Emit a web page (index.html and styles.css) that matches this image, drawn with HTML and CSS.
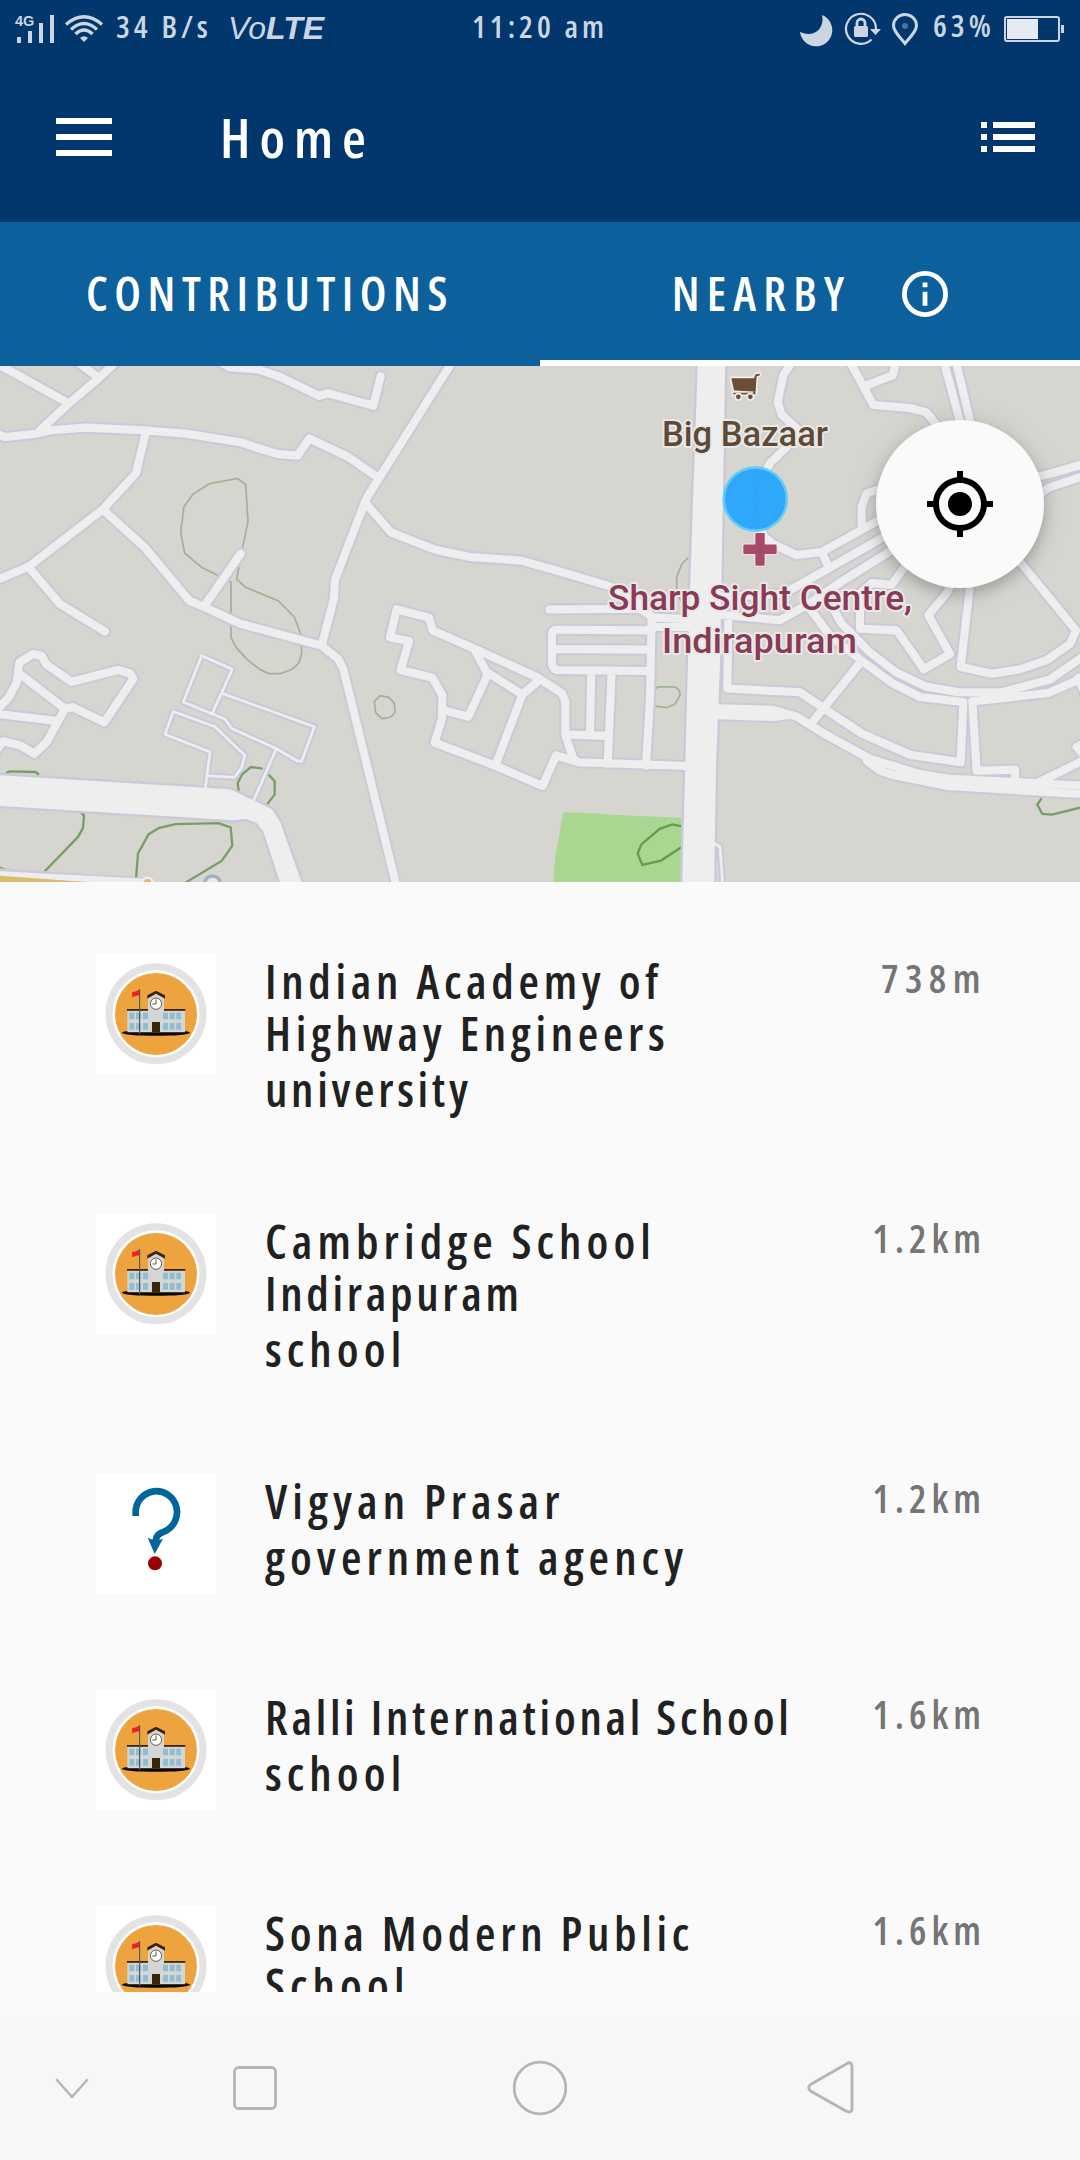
FILE: index.html
```html
<!DOCTYPE html>
<html lang="en">
<head>
<meta charset="utf-8">
<title>Home</title>
<link rel="stylesheet" href="styles.css">
</head>
<body>
<div class="screen">
  <header class="top">
    <div class="status">
      <div class="status-left">
        <svg class="i-signal" viewBox="0 0 44 54" width="44" height="54"><text x="0" y="24" class="net">4G</text><path d="M2 35h4v6h-4zM13 29h4v12h-4zM24 21h4v20h-4zM35 13h4v28h-4z" fill="#ccd6e2"/></svg>
        <svg class="i-wifi" viewBox="0 0 38 54" width="38" height="54" fill="none" stroke="#ccd6e2" stroke-width="3.2"><path d="M1 22.500Q19 7 37 22.500M6 27.500Q19 15.500 32 27.500M10.500 32Q19 24 27.500 32"/><path d="M19 40l-4-4q4-3.500 8 0z" fill="#ccd6e2" stroke="none"/></svg>
        <span class="hand small speed">34 B/s</span>
        <span class="volte">Vo<b>LTE</b></span>
      </div>
      <span class="hand small clock">11:20 am</span>
      <div class="status-right">
        <svg viewBox="0 0 34 54" width="34" height="54"><path d="M23 13A16.200 16.200 0 1 1 1 30Q12 35 19.500 28Q25 22 23 13z" fill="#ccd6e2"/></svg>
        <svg class="i-lock" viewBox="0 0 37 54" width="37" height="54" fill="none" stroke="#ccd6e2" stroke-width="2.200"><path d="M32 27A15 15 0 1 0 27.500 37.500"/><path d="M26 27h11l-5.500 6z" fill="#ccd6e2" stroke="none"/><rect x="10" y="24" width="14" height="11" rx="1.500" fill="#ccd6e2" stroke="none"/><path d="M13 25v-4a4 4 0 0 1 8 0v4" stroke-width="2.800"/></svg>
        <svg class="i-pin" viewBox="0 0 28 54" width="28" height="54"><path d="M14 41.500C8 34 2.500 29 2.500 23.500a11.500 11 0 0 1 23 0C25.500 29 20 34 14 41.500z" fill="none" stroke="#ccd6e2" stroke-width="3"/><circle cx="14" cy="24" r="3" fill="#4d7299"/></svg>
        <span class="hand small pct">63%</span>
        <svg class="i-batt" viewBox="0 0 61 54" width="61" height="54"><rect x="1" y="15" width="54" height="24" rx="2" fill="none" stroke="#ccd6e2" stroke-width="2"/><path d="M3 17h31v20H3z" fill="#e6eaf1"/><path d="M57 23h3v8h-3z" fill="#ccd6e2"/></svg>
      </div>
    </div>
    <div class="appbar">
      <svg width="56" height="38" viewBox="0 0 56 38" fill="#fff"><path d="M0 0h56v6H0zM0 16h56v6H0zM0 32h56v6H0z"/></svg>
      <h1 class="hand title">Home</h1>
      <svg width="54" height="30" viewBox="0 0 54 30" fill="#fff"><path d="M0 0h6v6H0zM0 12h6v6H0zM0 24h6v6H0zM12 0h42v6H12zM12 12h42v6H12zM12 24h42v6H12z"/></svg>
    </div>
  </header>
  <nav class="tabs">
    <div class="tab"><span class="hand tab-a">CONTRIBUTIONS</span></div>
    <div class="tab active"><span class="hand tab-b">NEARBY</span>
      <svg width="46" height="46" viewBox="0 0 46 46"><circle cx="23" cy="23" r="20.600" fill="none" stroke="#fff" stroke-width="4.800"/><path d="M20.600 11.500h4.800v4.700h-4.800zM20.600 20.700h4.800v14h-4.800z" fill="#fff"/></svg>
    </div>
  </nav>
  <section class="map">
    <svg class="map-art" width="1080" height="516" viewBox="0 0 1080 516">
      <defs>
        <g id="blocks">
          <path transform="translate(0 -6) scale(.33333 .33801)" d="M-20 1227L690 1270 815 1328 840 1365 910 1560H845L790 1395 770 1370 740 1358 700 1362-20 1318z"/>
          <path transform="translate(360 -6) scale(.33333 .33801)" d="M1014 -10L988 740 966 1570H1062L1068 1200 1080 900 1096 -10z"/>
        </g>
        <g id="roads">
          <path transform="translate(0 -6) scale(.33333 .33801)" d="M-20 5L60 48 205 128M225 0L295 52M360 -5L295 55 205 130 120 208M-20 215L15 228 110 218 150 208 258 200 430 208 560 218 720 243 830 278 893 283 928 232 1045 287 1130 345M437 215L408 335 308 442 85 612-20 655M308 442L435 555 568 712 615 732 720 780 965 845 1015 885 1030 915 1080 1115 1195 1580M615 725L722 573M85 612L180 722 315 803M640 -5L690 22 775 28 840 50 957 106 983 98 1120 135 1142 48M965 845L1002 705 1005 650 1095 420 1105 400 1360 0M-10 1035L25 1000 50 955 58 895 98 870 125 875 138 900 215 952 353 917 390 927 400 943 313 1072 218 1027 195 1032 140 1130 103 1165 60 1140 10 1128-15 1160M60 930L190 1028M-10 1047L165 1067"/>
          <path transform="translate(360 -6) scale(.33333 .33801)" d="M18 425L93 510 228 562 330 583 480 593 580 620 745 668 820 700 875 760M568 738L840 736 880 762 1010 768M875 762L870 1000 858 1200M875 790L1010 790M875 800L590 798Q576 798 576 815V900Q580 916 592 917L870 920M578 855L868 857M694 920L690 1105M755 920L743 1195M620 1108L745 1112M110 738L207 762 218 800 345 855 530 938 605 985 616 1010V1110L640 1180 655 1190 745 1193 1000 1202M110 738L90 820 147 832 122 917 217 940 247 992 246 1060 224 1132 400 1198 548 1260 588 1170 655 1190M247 1035L325 1055 383 930 345 860M383 925L487 990 540 945M487 990L408 1195"/>
          <path transform="translate(720 -6) scale(.33333 .33801)" d="M220 0L190 45 173 125 185 162 245 215 150 305 118 370 108 440 130 520 160 545 230 577 305 568 420 505 520 450M305 568L325 610M390 5L460 133 570 142 620 155 660 205M440 75L518 45 530 0M670 0L725 200M707 0L755 200M425 500V435L440 395 470 385H520M-40 703L190 692 320 620 480 530 560 480M-40 750L180 770 260 725 350 665 520 560M950 345L985 338 1100 305M950 405L985 378 1100 340M555 610L515 665 455 660 420 690V795L530 800 612 915 690 870 625 755 680 690 700 650M752 650L722 908 815 928 900 915 980 888 1050 840 1068 800 890 585M330 720L365 780 450 865 530 925 615 965 715 983H845L990 945 1100 870M265 730L330 815 425 890 515 955 600 997 730 1012 722 1190 570 1168 425 1105 240 983 22 972 25 765M425 890L270 1080M1100 935L985 985 757 1010 770 1215 885 1212V1240M1075 940L1100 1000M-30 1030L160 1035 230 1055 320 1110 450 1180 600 1225 680 1238 1100 1260M-30 1050L160 1056 205 1050M440 1185L480 1215 520 1228 680 1260 1100 1285M955 1250L1100 1180M1100 1180L1070 1145 1100 1130"/>
        </g>
        <g id="lanes">
          <path transform="translate(0 -6) scale(.33333 .33801)" d="M605 875L697 915 637 1045M605 875L550 1012 637 1047 675 1062 695 1090 830 1150 893 1187H905L943 1085 668 987M828 1152L758 1310M520 1040L645 1085 735 1170 725 1205 703 1235 622 1230M520 1040L495 1107 630 1160 615 1275"/>
          <path transform="translate(720 -6) scale(.33333 .33801)" d="M-20 1428L0 1440 10 1580"/>
        </g>
      </defs>
      <rect width="1080" height="516" fill="#d6d5d0"/>
      <path transform="translate(360 -6) scale(.33333 .33801)" d="M610 1338L642 1339 712 1342 780 1346 850 1350 965 1354V1570H577L586 1470z" fill="#a9d792"/>
      <g fill="none" stroke="#9fb292" stroke-width="5" stroke-linejoin="round">
        <path transform="translate(0 -6) scale(.33333 .33801)" d="M728 555L744 478 737 369 713 350 628 366 580 396 552 434 542 510 554 571 604 613 653 637M688 656H693V821L709 851 740 885 780 916 808 928H840L876 915 896 897 905 868 903 812 883 761 836 713 736 672 710 648 717 612"/>
        <path transform="translate(360 -6) scale(.33333 .33801)" d="M43 1010L60 993 87 998 103 1016 105 1042 92 1057 66 1061 47 1044zM886 972L896 967H945L957 976 961 990 945 1018 922 1028 883 1024M985 585L966 603 950 642V680L962 712 975 723"/>
      </g>
      <g fill="none" stroke="#789e68" stroke-width="7">
        <path transform="translate(0 -6) scale(.33333 .33801)" d="M716 1275L713 1252 727 1225 753 1204 788 1209M805 1226L824 1246V1285L802 1314M18 1222L30 1217 107 1219 117 1227M242 1338L252 1347 249 1384 234 1411 130 1517M408 1536L414 1460 446 1403 478 1384 527 1373 655 1370 692 1383 697 1437 665 1482 555 1547M-5 1500L15 1508"/>
        <path transform="translate(360 -6) scale(.33333 .33801)" stroke="#649c4a" d="M965 1380L937 1374 899 1387 844 1433 833 1460 847 1494 903 1481 965 1441"/>
        <path transform="translate(720 -6) scale(.33333 .33801)" d="M965 1296L952 1315 967 1343 996 1345 1090 1322"/>
      </g>
      <path d="M-5 506L150 516" stroke="#c9cad9" stroke-width="8"/>
      <path d="M-5 508L150 516" stroke="#eee" stroke-width="6"/>
      <path d="M-5 509.500L100 517H-5z" fill="#d9bd6c"/>
      <circle cx="147.500" cy="517" r="6.500" fill="#eee"/><circle cx="147.500" cy="517" r="4" fill="#dabb6c"/>
      <circle cx="212.500" cy="518" r="8" fill="#e8e8ee" stroke="#a9adc4" stroke-width="3.500"/>
      <use href="#lanes" class="lane-case"/>
      <use href="#blocks" class="block-case"/>
      <use href="#roads" class="road-case"/>
      <use href="#blocks" class="block"/>
      <use href="#roads" class="road"/>
      <use href="#lanes" class="lane"/>
      <g transform="translate(720 -6) scale(.33333 .33801)">
        <g stroke="#eee" stroke-width="10" paint-order="stroke" stroke-linejoin="round" fill="#6c4e35">
          <path d="M34 54H102L106 43 119 40V46L110 48 106 102H40V97H100L101 93 42 90z"/>
          <circle cx="55" cy="109" r="7"/><circle cx="91" cy="109" r="7"/>
        </g>
        <path d="M108 512h24q2 0 2 4v30h32q4 0 4 4v20q0 4-4 4h-32v30q0 5-4 5h-20q-4 0-4-5v-30H74q-4 0-4-4v-20q0-4 4-4h32v-30z" fill="#a64a68" stroke="#eaeaea" stroke-width="6" paint-order="stroke"/>
      </g>
      <circle cx="755.300" cy="133" r="31.500" fill="#2fa8fc" stroke="#5fcdf5" stroke-width="2.500"/>
      <path d="M761 107Q750 133 759 158" fill="none" stroke="#369ff0" stroke-width="2" opacity=".5"/>
      <g class="place">
        <text x="662" y="80" textLength="166" lengthAdjust="spacingAndGlyphs" fill="#5f4a38">Big Bazaar</text>
        <text x="608" y="244" textLength="304" lengthAdjust="spacingAndGlyphs" fill="#8a3a56">Sharp Sight Centre,</text>
        <text x="662" y="287" textLength="195" lengthAdjust="spacingAndGlyphs" fill="#8a3a56">Indirapuram</text>
      </g>
    </svg>
    <button class="locate" aria-label="My location">
      <svg width="72" height="72" viewBox="0 0 24 24"><path d="M12 8c-2.210 0-4 1.790-4 4s1.790 4 4 4 4-1.790 4-4-1.790-4-4-4zm8.940 3c-.46-4.170-3.770-7.480-7.940-7.940V1h-2v2.060C6.830 3.520 3.520 6.830 3.060 11H1v2h2.060c.46 4.170 3.770 7.480 7.940 7.940V23h2v-2.060c4.170-.46 7.480-3.770 7.940-7.940H23v-2h-2.060zM12 19c-3.870 0-7-3.130-7-7s3.130-7 7-7 7 3.130 7 7-3.130 7-7 7z"/></svg>
    </button>
  </section>
  <svg width="0" height="0" class="defs">
    <symbol id="school" viewBox="3 12 360 360">
      <circle cx="183" cy="191" r="141" fill="#fff" stroke="#e3e3e3" stroke-width="21"/>
      <circle cx="183" cy="192" r="123" fill="#eda43f"/>
      <ellipse cx="183" cy="248" rx="102" ry="9.500" fill="#0b0704"/>
      <path d="M97 182H159V140L183 127 207 140V182H270V247H97z" fill="#d3d5d7"/>
      <path d="M96 177H159V182H96zM207 177H271V182H207zM157 136L183 122 210 136V146L183 131 157 146zM171 216H195V247H171z" fill="#3b2507"/>
      <circle cx="183" cy="161" r="17" fill="#fff" stroke="#6d5a42" stroke-width="3"/>
      <path d="M183 148V162H172" fill="none" stroke="#6d5a42" stroke-width="3"/>
      <path d="M103 188h15v20h-15zM123 188h15v20h-15zM144 188h15v20h-15zM204 188h15v20h-15zM224 188h15v20h-15zM244 188h14v20h-14zM103 219h15v20h-15zM123 219h15v20h-15zM144 219h15v20h-15zM204 219h15v20h-15zM224 219h15v20h-15zM244 219h14v20h-14z" fill="#90bdd0"/>
      <path d="M132 117h3.500v136H132z" fill="#555960"/>
      <path d="M111 126Q121 126 132 119V136Q121 138 112 142z" fill="#ed2024"/>
    </symbol>
    <symbol id="unknown" viewBox="48 102 360 360">
      <path d="M167 228V217A62 63 0 1 1 252 275Q229 281 227 302" fill="none" stroke="#069" stroke-width="20"/>
      <path d="M203 293Q225 305 249 296L224 342z" fill="#069"/>
      <circle cx="225" cy="370" r="21" fill="#900"/>
    </symbol>
  </svg>
  <main class="list">
    <article class="row"><svg class="thumb"><use href="#school"/></svg>
      <div class="info hand"><p class="name">Indian Academy of<br>Highway Engineers</p><p class="kind tight">university</p></div><span class="dist hand metres">738m</span></article>
    <article class="row"><svg class="thumb"><use href="#school"/></svg>
      <div class="info hand"><p class="name"><span class="loose">Cambridge School</span><br><span class="tight">Indirapuram</span></p><p class="kind loose">school</p></div><span class="dist hand">1.2km</span></article>
    <article class="row"><svg class="thumb"><use href="#unknown"/></svg>
      <div class="info hand"><p class="name loose">Vigyan Prasar</p><p class="kind loose">government agency</p></div><span class="dist hand">1.2km</span></article>
    <article class="row"><svg class="thumb"><use href="#school"/></svg>
      <div class="info hand"><p class="name tight">Ralli International School</p><p class="kind loose">school</p></div><span class="dist hand">1.6km</span></article>
    <article class="row"><svg class="thumb"><use href="#school"/></svg>
      <div class="info hand"><p class="name">Sona Modern Public<br><span class="loose">School</span></p><p class="kind loose">school</p></div><span class="dist hand">1.6km</span></article>
  </main>
  <footer class="navbar">
    <svg width="1080" height="144" viewBox="0 0 1080 144" fill="none" stroke="#b5b5b5" stroke-width="2.800" stroke-linecap="round" stroke-linejoin="round">
      <path d="M57 64L72 81 87 64" stroke-width="2.400"/>
      <rect x="234.500" y="51.500" width="41" height="41" rx="4"/>
      <circle cx="540" cy="72" r="25.800"/>
      <path d="M848 47L810.500 68.500Q807 71.500 810.500 75L845 94.500Q852 98 852 92.500V51Q852 45 847 47.500z"/>
    </svg>
  </footer>
</div>
</body>
</html>
```
FILE: styles.css
```css
* { box-sizing: border-box; margin: 0; padding: 0; }
body { background: #fafafa; }
svg { display: block; flex: none; }
.screen { width: 1080px; height: 2160px; display: flex; flex-direction: column; overflow: hidden; background: #fafafa; }
.hand { font-family: "Open Sans", "Noto Sans", sans-serif; font-stretch: 75%; font-weight: 600; white-space: nowrap; }

.top { height: 222px; background: #02376d; flex: none; }
.status { height: 54px; display: grid; grid-template-columns: 1fr auto 1fr; color: #ccd6e2; }
.status-left, .status-right { display: flex; align-items: center; }
.status-left { padding-left: 15px; }
.status-right { justify-content: flex-end; padding-right: 15px; }
.net { font: bold 14.500px "Liberation Sans", sans-serif; fill: #ccd6e2; }
.i-wifi { margin-left: 6px; }
.small { font-size: 31px; line-height: 50px; letter-spacing: 4px; }
.speed { margin: -7px 0 0 13px; width: 112px; }
.volte { font: italic 32px/60px "Liberation Sans", sans-serif; margin-top: -2px; }
.clock { line-height: 53px; }
.i-lock { margin-left: 11px; }
.i-pin { margin-left: 10px; }
.pct { margin: -8px 0 0 14px; width: 71px; line-height: 46px; }
.appbar { height: 168px; display: flex; align-items: center; padding: 0 45px 0 56px; }
.appbar svg { margin-top: -2px; }
.title { margin: -2px auto 0 108px; font-size: 55px; font-stretch: 82%; line-height: 60px; letter-spacing: 9px; color: #fff; }

.tabs { height: 144px; display: flex; background: #0c609c; color: #fff; flex: none; }
.tab { flex: 1; display: flex; align-items: center; justify-content: center; font-size: 47px; line-height: 54px; }
.tab span { margin-top: -3px; }
.tab-a { letter-spacing: 6.500px; }
.tab-b { letter-spacing: 7.200px; }
.active { border-bottom: 6px solid #fff; padding-top: 6px; gap: 51px; }

.map { position: relative; height: 516px; flex: none; overflow: hidden; }
.road-case, .lane-case, .block-case { stroke: #c9cad9; stroke-linejoin: round; fill: none; }
.road, .lane { stroke: #eee; stroke-linejoin: round; stroke-linecap: round; fill: none; }
.road-case { stroke-width: 36px; stroke-linecap: round; }
.road { stroke-width: 24px; }
.lane-case { stroke-width: 20px; }
.lane { stroke-width: 8px; }
.block-case { stroke-width: 14px; }
.block { fill: #eee; }
.place { font: 500 35px Roboto, sans-serif; stroke: #e9e9e8; stroke-width: 4px; stroke-linejoin: round; paint-order: stroke; }
.locate { position: absolute; left: 876px; top: 54px; width: 168px; height: 168px; border: 0; border-radius: 50%; background: #fafafa; display: flex; align-items: center; justify-content: center; box-shadow: 0 6px 14px rgba(0,0,0,.2), 0 2px 30px rgba(0,0,0,.1); }

.list { height: 1110px; padding-top: 24px; overflow: hidden; flex: none; }
.row { display: flex; align-items: flex-start; padding: 48px 96px; }
.thumb { width: 120px; height: 120px; background: #fff; }
.info { flex: 1; min-height: 121px; margin-bottom: -1px; padding: 1px 0 0 49px; color: #212121; font-size: 47px; letter-spacing: 4.700px; }
.name { line-height: 52px; }
.kind { line-height: 60px; }
.tight { letter-spacing: 3.700px; }
.loose { letter-spacing: 5.100px; }
.dist { margin-right: -2px; font-size: 39px; line-height: 47px; color: #757575; letter-spacing: 5px; }
.metres { letter-spacing: 6.500px; margin-right: -3px; }

.navbar { margin-top: auto; height: 144px; background: #f7f7f7; }
```
